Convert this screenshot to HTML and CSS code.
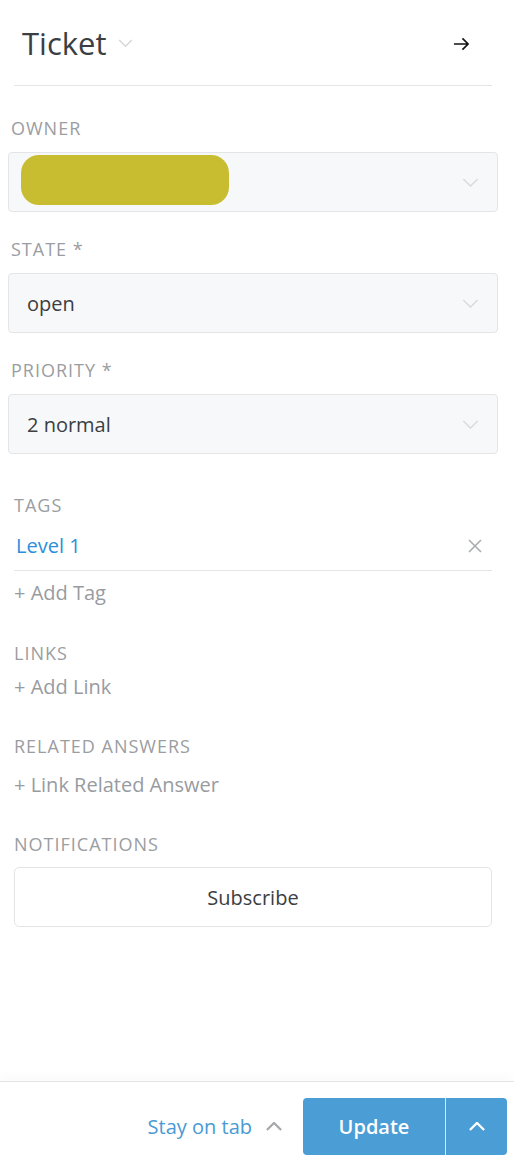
FILE: index.html
```html
<!DOCTYPE html>
<html>
  <head>
    <meta charset="utf-8">
    <title>Ticket sidebar</title>
    <link rel="stylesheet" href="styles.css">
  </head>
  <body>
    <div class="sidebar">
      <div class="head">
        <h2 class="title">Ticket</h2>
        <svg class="title-caret" viewBox="0 0 16 10" width="15" height="9"><path d="M1 1l7 7 7-7" fill="none" stroke="#d4d6d9" stroke-width="1.6"/></svg>
        <svg class="close" viewBox="0 0 18 14" width="17" height="14"><path d="M1 7h15M10 1l6 6-6 6" fill="none" stroke="#111" stroke-width="1.7"/></svg>
      </div>

      <div class="attrs">
        <div class="field">
          <label>Owner</label>
          <div class="select">
            <span class="blob"></span>
            <svg class="caret" viewBox="0 0 18 10" width="17" height="9"><path d="M1 1l8 8 8-8" fill="none" stroke="#d9dbde" stroke-width="1.6"/></svg>
          </div>
        </div>
        <div class="field">
          <label>State *</label>
          <div class="select">
            <span class="value">open</span>
            <svg class="caret" viewBox="0 0 18 10" width="17" height="9"><path d="M1 1l8 8 8-8" fill="none" stroke="#d9dbde" stroke-width="1.6"/></svg>
          </div>
        </div>
        <div class="field">
          <label>Priority *</label>
          <div class="select">
            <span class="value">2 normal</span>
            <svg class="caret" viewBox="0 0 18 10" width="17" height="9"><path d="M1 1l8 8 8-8" fill="none" stroke="#d9dbde" stroke-width="1.6"/></svg>
          </div>
        </div>
      </div>

      <div class="extras">
        <div class="block tags">
          <div class="label">Tags</div>
          <div class="tag">
            <a>Level 1</a>
            <svg class="remove" viewBox="0 0 14 14" width="14" height="14"><path d="M1 1l12 12M13 1L1 13" fill="none" stroke="#a9acb0" stroke-width="1.6"/></svg>
          </div>
          <div class="add">+ Add Tag</div>
        </div>
        <div class="block links">
          <div class="label">Links</div>
          <div class="add">+ Add Link</div>
        </div>
        <div class="block answers">
          <div class="label">Related Answers</div>
          <div class="add">+ Link Related Answer</div>
        </div>
        <div class="block notify">
          <div class="label">Notifications</div>
          <button class="subscribe">Subscribe</button>
        </div>
      </div>

      <div class="footer">
        <span class="stay">Stay on tab</span>
        <svg class="stay-caret" viewBox="0 0 18 10" width="16" height="9"><path d="M1 9l8-8 8 8" fill="none" stroke="#a4a7ab" stroke-width="2.4"/></svg>
        <div class="update">
          <span class="update-main">Update</span>
          <span class="update-more"><svg viewBox="0 0 18 10" width="16" height="9"><path d="M1 9l8-8 8 8" fill="none" stroke="#fff" stroke-width="2.6"/></svg></span>
        </div>
      </div>
    </div>
  </body>
</html>
```

FILE: styles.css
```css
body{margin:0;font-family:"Open Sans","Noto Sans",sans-serif;color:#3f4246;background:#fff}
.sidebar{display:flex;flex-direction:column;min-height:1163px}

.head{display:flex;align-items:center;height:85px;margin:0 22px 0 14px;padding-left:8px;border-bottom:1px solid #e3e4e6}
.title{margin:0;font-size:31px;font-weight:400;color:#3b3f44;line-height:40px}
.title-caret{margin-left:11px;margin-top:2px}
.close{margin-left:auto;margin-right:22px;margin-top:2px}

.attrs{padding:31px 16px 0 8px}
.field + .field{margin-top:26px}
.field label{display:block;padding-left:3px;margin-bottom:13px;font-size:18px;letter-spacing:1px;text-transform:uppercase;color:#9a9da1;line-height:22px}
.select{display:flex;align-items:center;height:58px;padding:0 18px 0 18px;background:#f7f8fa;border:1px solid #e4e5e7;border-radius:4px}
.value{font-size:20px;color:#3b3e42}
.blob{display:block;align-self:flex-start;width:208px;height:50px;margin:2px 0 0 -6px;border-radius:18px;background:#c8bd30}
.caret{margin-left:auto}

.extras{padding:40px 22px 0 14px}
.label{font-size:18px;letter-spacing:1px;text-transform:uppercase;color:#9a9da1;line-height:22px}
.tag{display:flex;align-items:center;height:28px;padding:16px 10px 10px 2px;border-bottom:1px solid #e3e4e6}
.tag a{font-size:20px;line-height:28px;color:#2b8fd9}
.remove{margin-left:auto}
.add{font-size:20px;color:#989ba0;line-height:28px}
.tags .add{margin-top:8px}
.links{margin-top:35px}
.links .add{margin-top:9px}
.answers{margin-top:34px}
.answers .add{margin-top:14px}
.notify{margin-top:34px}
.subscribe{display:block;width:100%;height:60px;margin-top:12px;background:#fff;border:1px solid #e3e4e6;border-radius:5px;font-family:inherit;font-size:20px;color:#3b3e42}

.footer{margin-top:auto;height:73px;padding:8px 7px 0 0;display:flex;align-items:center;justify-content:flex-end;border-top:1px solid #e3e4e6;box-shadow:0 -6px 10px rgba(0,0,0,0.02)}
.stay{font-size:20px;color:#4a9ad4}
.stay-caret{margin:0 21px 0 14px}
.update{display:flex;height:57px;border-radius:4px;overflow:hidden;background:#4b9dd6}
.update-main{width:142px;display:flex;align-items:center;justify-content:center;font-size:20px;font-weight:600;color:#fff;border-right:1px solid #d7e8f5}
.update-more{width:61px;display:flex;align-items:center;justify-content:center}
```
